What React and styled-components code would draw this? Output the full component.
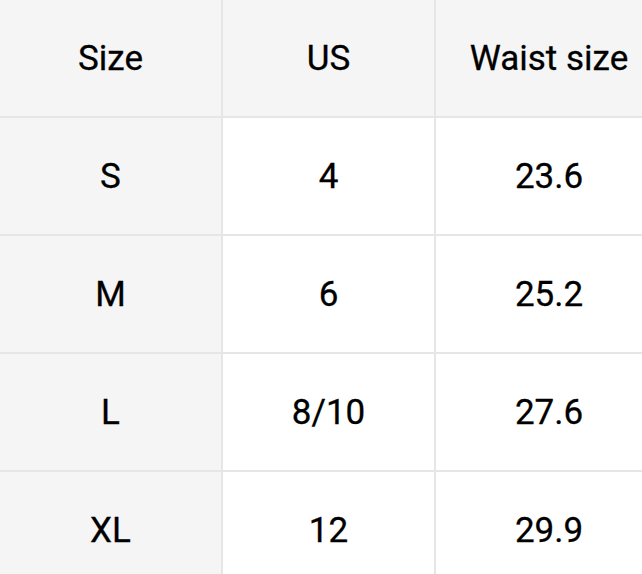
import React from "react";
import styled, { createGlobalStyle } from "styled-components";

const Global = createGlobalStyle`
  html, body { margin: 0; padding: 0; background: #ffffff; }
  body { overflow: hidden; font-family: Roboto, "Liberation Sans", sans-serif; }
`;

const Table = styled.div`
  display: grid;
  grid-template-columns: 221px 211px 226px;
  grid-auto-rows: 116px;
  gap: 2px;
  width: 662px;
  background: #e6e6e6;
`;

const Cell = styled.div`
  display: flex;
  align-items: center;
  justify-content: center;
  background: ${(p) => (p.$shade ? "#f5f5f5" : "#ffffff")};
  color: #000;
  font-size: 35px;
  font-weight: 400;
  line-height: 1;
  -webkit-text-stroke: 0.3px #000;
`;

const header = ["Size", "US", "Waist size"];
const rows = [
  ["S", "4", "23.6"],
  ["M", "6", "25.2"],
  ["L", "8/10", "27.6"],
  ["XL", "12", "29.9"],
];

export default function App() {
  return (
    <>
      <Global />
      <Table>
        {header.map((h) => (
          <Cell key={h} $shade>
            {h}
          </Cell>
        ))}
        {rows.map((r) =>
          r.map((v, i) => (
            <Cell key={r[0] + i} $shade={i === 0}>
              {v}
            </Cell>
          ))
        )}
      </Table>
    </>
  );
}
